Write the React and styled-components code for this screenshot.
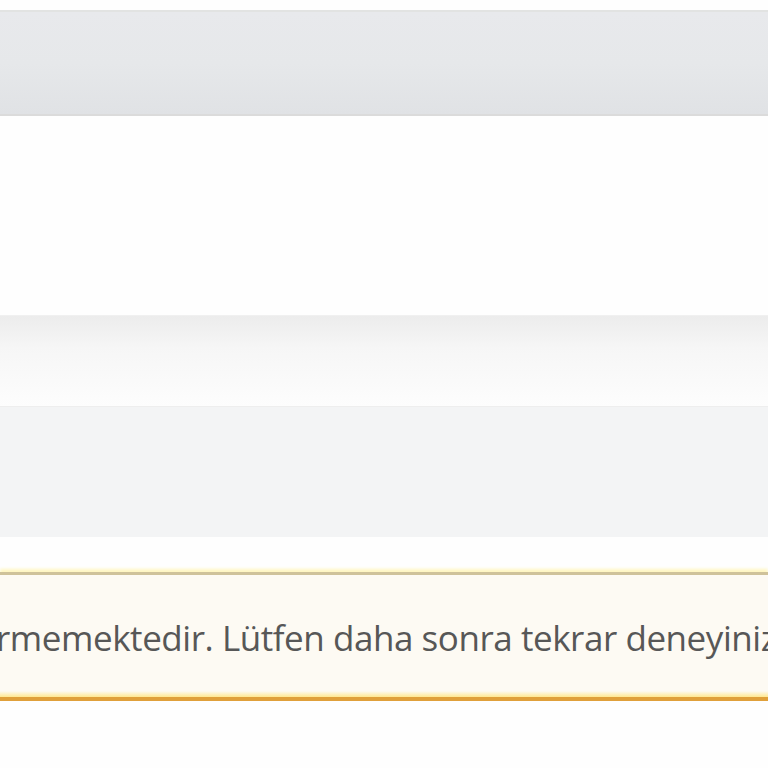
import React from "react";
import styled, { createGlobalStyle } from "styled-components";

const GlobalStyle = createGlobalStyle`
    html, body {
        margin: 0;
        padding: 0;
        background: #fefefe;
        overflow: hidden;
    }
`;

const Page = styled.div`
    width: 768px;
    height: 768px;
    overflow: hidden;
    display: flex;
    flex-direction: column;
    padding-top: 10px;
    box-sizing: border-box;
`;

const TopBar = styled.div`
    height: 102px;
    border-top: 2px solid #e2e3e2;
    border-bottom: 2px solid #dbdbdb;
    background: linear-gradient(#e8e9ec, #e6e8ea 50%, #e0e2e5);
`;

const Spacer = styled.div`
    height: ${(p) => p.h}px;
`;

const ShadowBand = styled.div`
    height: 90px;
    background: linear-gradient(#ececec, #f6f6f6 35%, #fdfdfd 100%);
    border-top: 1px solid #f0f0f0;
`;

const GreyPanel = styled.div`
    height: 130px;
    background: #f3f4f5;
    border-top: 1px solid #eeeeee;
`;

const Alert = styled.div`
    height: 122px;
    background: #fdfaf3;
    border-top: 3px solid #cfc29a;
    box-shadow: 0 -3px 3px #fff6c0;
    border-bottom: 4px solid #e0a03a;
    position: relative;
    display: flex;
    align-items: center;
    overflow: hidden;
`;

const AlertGlow = styled.div`
    position: absolute;
    left: 0;
    right: 0;
    bottom: 0;
    height: 6px;
    background: linear-gradient(#fdfaf3, #ffe890);
`;

const AlertText = styled.p`
    margin: 0 0 0 -4px;
    white-space: nowrap;
    font-family: "Open Sans", "Liberation Sans", sans-serif;
    font-size: 35px;
    letter-spacing: -0.45px;
    color: #575757;
    padding-top: 2px;
`;

const App = () => {
    return (
        <Page>
            <GlobalStyle />
            <TopBar />
            <Spacer h={199} />
            <ShadowBand />
            <GreyPanel />
            <Spacer h={35} />
            <Alert>
                <AlertText>rmemektedir. Lütfen daha sonra tekrar deneyiniz.</AlertText>
                <AlertGlow />
            </Alert>
        </Page>
    );
};

export default App;
